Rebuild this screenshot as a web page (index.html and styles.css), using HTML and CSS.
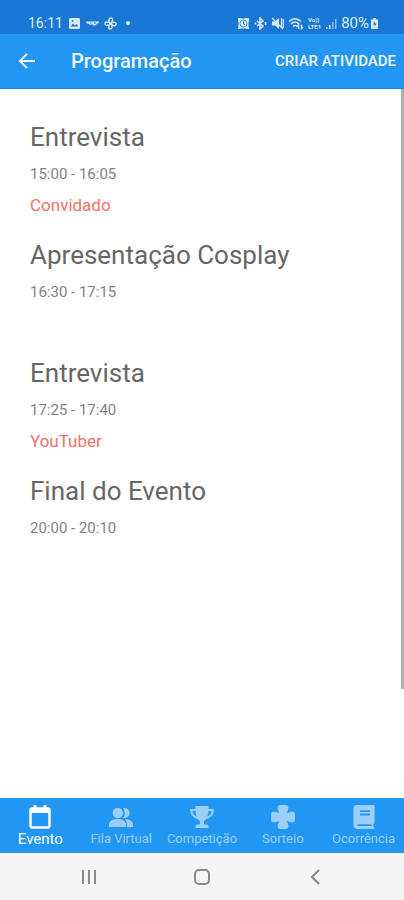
FILE: index.html
```html
<!DOCTYPE html>
<html lang="pt-BR">
<head>
<meta charset="utf-8">
<meta name="viewport" content="width=device-width, initial-scale=1">
<title>Programação</title>
<link rel="stylesheet" href="styles.css">
</head>
<body>
<div class="status">
  <div class="status-group">
    <span class="status-text">16:11</span>
    <svg width="13" height="13" viewBox="0 0 13 13"><rect x="1" y="1" width="11" height="11" rx="1.500" fill="currentColor"/><path d="M2.500 9.500 5 6.500l2 2 1.500-1.500 2 2.500z" fill="#1976d2"/><circle cx="4.500" cy="4" r="1" fill="#1976d2"/></svg>
    <svg width="13" height="13" viewBox="0 0 13 13"><path d="M0 4.500h13l-.5 2H11L9.500 8.500H7L6 7 4.500 8 2 6.500H.5z" fill="currentColor"/><path d="M4 6h1.500M8 6h2" stroke="#1976d2"/></svg>
    <svg width="13" height="13" viewBox="0 0 13 13" fill="none" stroke="currentColor" stroke-width="1.400"><path d="M6.500 6.500C3.500 4 5 1 7 1s2.500 3-.5 5.500C10 4 12.500 5.500 12 7.500s-3 1.500-5.500-1C9 10 8 12 6 12s-2-3 .5-5.500C3.500 9.500 1 8.500 1 6.500s3-2 5.500 0z"/></svg>
    <span class="dot"></span>
  </div>
  <div class="status-group tight">
    <svg width="13" height="13" viewBox="0 0 13 13"><path d="M1 1h3l1 .5h3L9 1h3v3l-.5 1v4l.5 3h-2l-1-.5H4l-1 .5H1l.5-3V5L1 4z" fill="currentColor"/><circle cx="6.500" cy="6.500" r="3.500" fill="none" stroke="#1976d2" stroke-width=".7"/><path d="M6.500 4.500v2.300l1.500.7" fill="none" stroke="#1976d2"/></svg>
    <svg width="13" height="13" viewBox="0 0 13 13" fill="none" stroke="currentColor" stroke-width="1.600"><path d="m3 4 6 5-3 3V1l3 3-6 5"/><path d="M1.500 5.500v2M11.500 5v3"/></svg>
    <svg width="13" height="13" viewBox="0 0 13 13"><path d="M1 4.500h3L8 1v11L4 8.500H1z" fill="currentColor"/><path d="m1 1 11 11M10.500 1v9M12.300 2v9" stroke="currentColor" stroke-width="1.200"/></svg>
    <svg width="16" height="13" viewBox="0 0 16 13" fill="none" stroke="currentColor" stroke-width="1.400"><path d="M1 4.500q6-5.500 12 0M3 7q4-4 8 0M5 9.500q2-2 4 0"/><path d="M10.500 12V8l-1.500 1.500M13.500 7.500v4l1.500-1.500"/></svg>
    <span class="volte"><span>Vo))</span><span>LTE1</span></span>
    <svg width="12" height="13" viewBox="0 0 12 13" fill="currentColor"><path d="M1 10h1.500v2H1zM4 8h1.500v4H4z"/><path d="M7 5h1.500v7H7zM10 2h1.500v10H10z" opacity=".6"/></svg>
    <span class="battery">80%<svg width="9" height="13" viewBox="0 0 9 13"><path d="M3 1h3v1.500h2V12H1V2.500h2z" fill="currentColor"/><path d="m5 4-2 3.500h1.500V10l2-3.500H5z" fill="#1976d2"/></svg></span>
  </div>
</div>

<header class="toolbar">
  <button class="back" type="button" aria-label="Voltar">
    <svg width="18" height="18" viewBox="0 0 18 18" fill="none" stroke="currentColor" stroke-width="2"><path d="M17 9H2.500M9 2 2 9l7 7"/></svg>
  </button>
  <h1>Programação</h1>
  <button class="create" type="button">CRIAR ATIVIDADE</button>
</header>

<main class="content">
  <ul class="schedule">
    <li><h2>Entrevista</h2><p class="time">15:00 - 16:05</p><p class="guest">Convidado</p></li>
    <li><h2>Apresentação Cosplay</h2><p class="time">16:30 - 17:15</p></li>
    <li><h2>Entrevista</h2><p class="time">17:25 - 17:40</p><p class="guest">YouTuber</p></li>
    <li><h2>Final do Evento</h2><p class="time">20:00 - 20:10</p></li>
  </ul>
  <div class="scrollbar"></div>
</main>

<nav class="tabs">
  <a class="tab active" href="#evento">
    <svg width="26" height="26" viewBox="0 0 26 26"><path d="M8 1v5M18 1v5" stroke="currentColor" stroke-width="3"/><rect x="3.500" y="4.500" width="19" height="19" rx="2" fill="none" stroke="currentColor" stroke-width="2.500"/><path d="M3 4h20v5H3z" fill="currentColor"/></svg>
    <span>Evento</span>
  </a>
  <a class="tab" href="#fila">
    <svg width="26" height="26" viewBox="0 0 26 26" fill="currentColor"><path d="M15 4.300a5 5 0 1 1 0 9.400 7 7 0 0 0 0-9.400z"/><circle cx="9.800" cy="9" r="5.200"/><path d="M1 23v-2.500c0-3.500 4-5.500 8.500-5.500s8.500 2 8.500 5.500V23zM18.800 23v-3c0-2-.7-3.500-2-4.800 5 0 8.200 2 8.200 5.300V23z"/></svg>
    <span>Fila Virtual</span>
  </a>
  <a class="tab" href="#competicao">
    <svg width="26" height="26" viewBox="0 0 26 26"><path d="M6.500 2h13v2c0 7-1.500 11.500-4.500 13v3.500h3q1.500 0 1.500 3.500h-13q0-3.500 1.500-3.500h3V17C8 15.500 6.500 11 6.500 4z" fill="currentColor"/><path d="M8 6H2.200q.3 7 8 8.500M18 6h5.800q-.3 7-8 8.500" fill="none" stroke="currentColor" stroke-width="2.200"/></svg>
    <span>Competição</span>
  </a>
  <a class="tab" href="#sorteio">
    <svg width="26" height="26" viewBox="0 0 26 26" fill="currentColor"><path d="M10.500 1h5q3 0 3 3L17 9l5-1.500q3 0 3 3v5q0 3-3 3L17 17l1.500 5q0 3-3 3h-5q-3 0-3-3L9 17l-5 1.500q-3 0-3-3v-5q0-3 3-3L9 9 7.500 4q0-3 3-3z"/></svg>
    <span>Sorteio</span>
  </a>
  <a class="tab" href="#ocorrencia">
    <svg width="26" height="26" viewBox="0 0 26 26"><path d="M6 1h16q1.500 0 1.500 1.500v16q0 1-1 1.500v3q1 0 1 1t-1 1H6.500Q2.500 25 2.500 21V5Q2.500 1 6 1z" fill="currentColor"/><path d="M9 7.200h10M9 10.500h10M6.500 21.200h14" stroke="#2196f3" stroke-width="1.800"/></svg>
    <span>Ocorrência</span>
  </a>
</nav>

<div class="system">
  <button type="button" aria-label="Recentes"><svg width="18" height="18" viewBox="0 0 18 18" stroke="currentColor" stroke-width="2"><path d="M3 2v14M9 2v14M15 2v14"/></svg></button>
  <button type="button" aria-label="Início"><svg width="18" height="18" viewBox="0 0 18 18" fill="none" stroke="currentColor" stroke-width="2"><rect x="2" y="2" width="14" height="14" rx="4"/></svg></button>
  <button type="button" aria-label="Voltar"><svg width="18" height="18" viewBox="0 0 18 18" fill="none" stroke="currentColor" stroke-width="2"><path d="m13 2-7 7 7 7"/></svg></button>
</div>
</body>
</html>
```
FILE: styles.css
```css
* {
  box-sizing: border-box;
}

body {
  margin: 0;
  min-height: 100vh;
  display: flex;
  flex-direction: column;
  background: #fff;
  color: #666;
  font-family: Roboto, sans-serif;
}

h1, h2, p, ul {
  margin: 0;
  padding: 0;
  font-weight: 400;
}

svg {
  display: block;
  flex: none;
}

button {
  padding: 0;
  border: 0;
  background: none;
  color: inherit;
  font: inherit;
}

.status {
  display: flex;
  justify-content: space-between;
  height: 34px;
  padding: 12px 25px 0 28px;
  background: #1976d2;
  color: #d8ebfb;
}

.status-group {
  display: flex;
  align-items: center;
  gap: 5px;
  height: 22px;
}

.status-text {
  font-size: 14px;
}

.tight {
  gap: 4px;
}

.volte {
  display: flex;
  flex-direction: column;
  font-size: 6px;
  font-weight: 700;
  line-height: 7px;
}

.battery {
  display: flex;
  align-items: center;
  gap: 1px;
  font-size: 15px;
}

.dot {
  width: 4px;
  height: 4px;
  margin-left: 4px;
  border-radius: 50%;
  background: currentColor;
}

.toolbar {
  display: flex;
  align-items: center;
  height: 55px;
  padding: 0 8px 0 18px;
  background: #2196f3;
  border-bottom: 1px solid #1b86dc;
  color: #eff8ff;
}

.toolbar h1 {
  flex: 1;
  margin-left: 35px;
  font-size: 20px;
  font-weight: 500;
}

.create {
  font-size: 15px;
  font-weight: 500;
}

.content {
  position: relative;
  flex: 1;
  padding: 31px 30px 0;
}

.schedule {
  list-style: none;
}

.schedule li {
  min-height: 118px;
}

h2 {
  font-size: 26px;
  line-height: 34px;
}

.time {
  margin-top: 10px;
  font-size: 15px;
  line-height: 20px;
  color: #828282;
}

.guest {
  margin-top: 9px;
  font-size: 17px;
  line-height: 24px;
  color: #f07265;
}

.scrollbar {
  position: absolute;
  top: 0;
  right: 0;
  bottom: 109px;
  width: 3px;
  background: #b0b0b0;
}

.tabs {
  display: grid;
  grid-template-columns: repeat(5, 1fr);
  height: 55px;
  background: #2196f3;
}

.tab {
  display: flex;
  flex-direction: column;
  align-items: center;
  padding-top: 6px;
  color: #9bcffa;
  font-size: 13px;
  line-height: 18px;
  text-decoration: none;
  white-space: nowrap;
}

.active {
  color: #fff;
  font-size: 15px;
}

.system {
  display: flex;
  justify-content: center;
  gap: 95px;
  height: 47px;
  background: #f5f5f5;
  color: #888;
}
```
